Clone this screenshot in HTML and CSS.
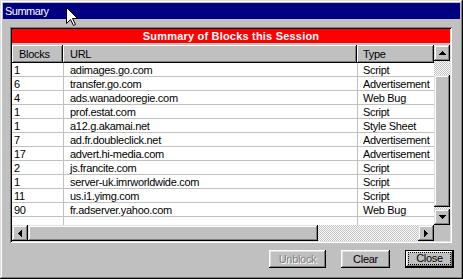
FILE: index.html
```html
<!DOCTYPE html>
<html>
<head>
<meta charset="utf-8">
<link rel="stylesheet" href="styles.css">
</head>
<body>
<div class="window">
  <div class="titlebar">Summary</div>
  <div class="frame">
    <div class="banner">Summary of Blocks this Session</div>
    <div class="list">
      <div class="list-main">
        <div class="view">
          <div class="head">
            <div class="hc h1">Blocks</div>
            <div class="hc h2">URL</div>
            <div class="hc h3">Type</div>
          </div>
          <div class="row"><div class="c c1">1</div><div class="c c2">adimages.go.com</div><div class="c c3">Script</div></div>
          <div class="row"><div class="c c1">6</div><div class="c c2">transfer.go.com</div><div class="c c3">Advertisement</div></div>
          <div class="row"><div class="c c1">4</div><div class="c c2">ads.wanadooregie.com</div><div class="c c3">Web Bug</div></div>
          <div class="row"><div class="c c1">1</div><div class="c c2">prof.estat.com</div><div class="c c3">Script</div></div>
          <div class="row"><div class="c c1">1</div><div class="c c2">a12.g.akamai.net</div><div class="c c3">Style Sheet</div></div>
          <div class="row"><div class="c c1">7</div><div class="c c2">ad.fr.doubleclick.net</div><div class="c c3">Advertisement</div></div>
          <div class="row"><div class="c c1">17</div><div class="c c2">advert.hi-media.com</div><div class="c c3">Advertisement</div></div>
          <div class="row"><div class="c c1">2</div><div class="c c2">js.francite.com</div><div class="c c3">Script</div></div>
          <div class="row"><div class="c c1">1</div><div class="c c2">server-uk.imrworldwide.com</div><div class="c c3">Script</div></div>
          <div class="row"><div class="c c1">11</div><div class="c c2">us.i1.yimg.com</div><div class="c c3">Script</div></div>
          <div class="row"><div class="c c1">90</div><div class="c c2">fr.adserver.yahoo.com</div><div class="c c3">Web Bug</div></div>
          <div class="row"><div class="c c1"></div><div class="c c2"></div><div class="c c3"></div></div>
        </div>
        <div class="vscroll">
          <div class="sbtn"><svg width="7" height="4" viewBox="0 0 7 4"><path d="M3 0h1v1h1v1h1v1h1v1H0V3h1V2h1V1h1z"/></svg></div>
          <div class="track vt1"></div>
          <div class="thumb vthumb"></div>
          <div class="track vt2"></div>
          <div class="sbtn"><svg width="7" height="4" viewBox="0 0 7 4"><path d="M0 0h7v1H6v1H5v1H4v1H3V3H2V2H1V1H0z"/></svg></div>
        </div>
      </div>
      <div class="hrow">
        <div class="hscroll">
          <div class="sbtn"><svg width="4" height="7" viewBox="0 0 4 7"><path d="M3 0h1v7H3V6H2V5H1V4H0V3h1V2h1V1h1z"/></svg></div>
          <div class="thumb hthumb"></div>
          <div class="track ht"></div>
          <div class="sbtn"><svg width="4" height="7" viewBox="0 0 4 7"><path d="M0 0h1v1h1v1h1v1h1v1H3v1H2v1H1v1H0z"/></svg></div>
        </div>
        <div class="corner"></div>
      </div>
    </div>
  </div>
  <div class="buttons">
    <div class="btn unblock">Unblock</div>
    <div class="btn clear">Clear</div>
    <div class="btn close"><span class="focus">Close</span></div>
  </div>
  <svg class="cursor" width="13" height="20" viewBox="0 0 13 20"><path d="M0.5 0.5V16.5L4.5 12.5L7.5 18.5L9.5 17.5L6.5 11.5H11.5Z" fill="#fff" stroke="#000" stroke-width="1"/></svg>
</div>
</body>
</html>
```
FILE: styles.css
```css
html, body {
  margin: 0;
  padding: 0;
  background: #c0c0c0;
  overflow: hidden;
}
body {
  font-family: "Liberation Sans", Arial, sans-serif;
  font-size: 11px;
  letter-spacing: -0.3px;
  color: #000;
}
.window {
  position: relative;
  width: 463px;
  height: 279px;
  box-sizing: border-box;
  padding: 3px;
  background: #c0c0c0;
  box-shadow: inset -1px -1px #000, inset 1px 1px #dfdfdf, inset -2px -2px #808080, inset 2px 2px #fff;
}
.titlebar {
  height: 16px;
  line-height: 16px;
  background: #000080;
  color: #fff;
  padding-left: 2px;
  letter-spacing: -0.5px;
}
.frame {
  margin: 8px 0 0 7px;
  width: 442px;
  height: 216px;
  box-sizing: border-box;
  padding: 2px;
  background: #c0c0c0;
  box-shadow: inset 1px 1px #808080, inset -1px -1px #fff, inset 2px 2px #000, inset -2px -2px #dfdfdf;
}
.banner {
  height: 14px;
  line-height: 14px;
  background: #ff0000;
  color: #fff;
  font-weight: bold;
  letter-spacing: 0.2px;
  text-align: center;
  margin-bottom: 2px;
}
.list-main {
  display: flex;
  height: 180px;
}
.view {
  width: 422px;
  height: 180px;
  overflow: hidden;
  background: #fff;
}
.head {
  display: flex;
  height: 18px;
  background: #c0c0c0;
}
.hc {
  height: 18px;
  line-height: 18px;
  box-sizing: border-box;
  box-shadow: inset -1px -1px #000, inset 1px 1px #fff, inset -2px -2px #808080;
  white-space: nowrap;
}
.h1 { width: 51px; padding-left: 7px; }
.h2 { width: 294px; padding-left: 7px; }
.h3 { width: 77px; padding-left: 6px; }
.row {
  display: flex;
  height: 14px;
}
.c {
  height: 14px;
  box-sizing: border-box;
  padding-top: 2px;
  line-height: 11px;
  border-bottom: 1px solid #c0c0c0;
  white-space: nowrap;
}
.c1 { width: 52px; padding-left: 2px; border-right: 1px solid #c0c0c0; }
.c2 { width: 294px; padding-left: 6px; border-right: 1px solid #c0c0c0; }
.c3 { width: 76px; padding-left: 5px; }
.vscroll {
  width: 16px;
  display: flex;
  flex-direction: column;
}
.sbtn {
  width: 16px;
  height: 16px;
  flex: none;
  background: #c0c0c0;
  box-sizing: border-box;
  box-shadow: inset -1px -1px #000, inset 1px 1px #dfdfdf, inset -2px -2px #808080, inset 2px 2px #fff;
  display: flex;
  align-items: center;
  justify-content: center;
}
.sbtn svg { display: block; }
.track {
  background-color: #fff;
  background-image: repeating-conic-gradient(#c0c0c0 0 25%, #fff 0 50%);
  background-size: 2px 2px;
}
.thumb {
  background: #c0c0c0;
  box-shadow: inset -1px -1px #000, inset 1px 1px #dfdfdf, inset -2px -2px #808080, inset 2px 2px #fff;
}
.vt1 { height: 14px; }
.vthumb { height: 132px; }
.vt2 { height: 2px; }
.hrow {
  display: flex;
  height: 16px;
}
.hscroll {
  display: flex;
  width: 422px;
}
.hthumb { width: 290px; }
.ht { flex: 1; }
.corner {
  width: 16px;
  background: #c0c0c0;
}
.buttons {
  display: flex;
  justify-content: flex-end;
  gap: 15px;
  margin-top: 7px;
  padding-right: 6px;
}
.btn {
  height: 18px;
  line-height: 18px;
  box-sizing: border-box;
  text-align: center;
  background: #c0c0c0;
  box-shadow: inset -1px -1px #000, inset 1px 1px #fff, inset -2px -2px #808080, inset 2px 2px #dfdfdf;
}
.unblock {
  width: 57px;
  color: #808080;
  text-shadow: 1px 1px #fff;
}
.clear { width: 49px; }
.close {
  width: 49px;
  border: 1px solid #000;
  padding-top: 2px;
  line-height: 12px;
  box-shadow: inset -1px -1px #000, inset 1px 1px #fff, inset -2px -2px #808080, inset 2px 2px #dfdfdf;
}
.focus {
  display: block;
  width: 41px;
  height: 11px;
  margin: 0 auto;
  box-sizing: border-box;
  line-height: 11px;
  outline: 1px dotted #000;
}
.cursor {
  position: absolute;
  left: 66px;
  top: 7px;
}
```
